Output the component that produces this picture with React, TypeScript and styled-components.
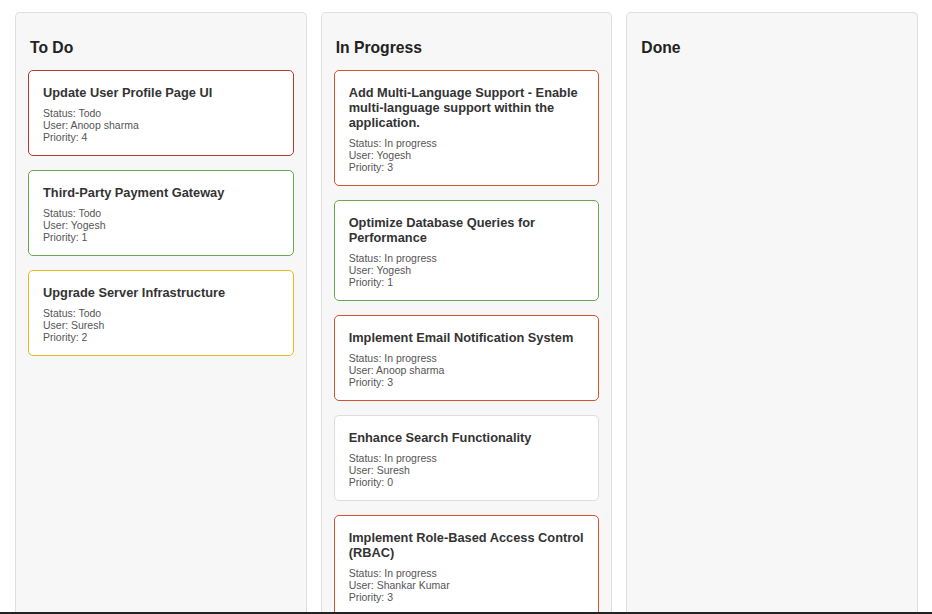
import React from "react";
import styled, { createGlobalStyle } from "styled-components";

type TTicket = {
  id: string;
  title: string;
  status: string;
  user: string;
  priority: number;
};

type TCard = {
  priority: number;
};

const GlobalStyle = createGlobalStyle`
  html, body {
    margin: 0;
    padding: 0;
    background: #ffffff;
    font-family: "Liberation Sans", Arial, sans-serif;
    overflow: hidden;
  }
`;

const priorityColors: Record<number, string> = {
  4: "#b8382e",
  3: "#d4522e",
  2: "#e8b91c",
  1: "#6aa84f",
  0: "#dddddd",
};

const Board = styled.div`
  display: grid;
  grid-template-columns: repeat(3, 1fr);
  gap: 14px;
  padding: 12px 14px 0 15px;
  height: 614px;
  box-sizing: border-box;
`;

const Column = styled.section`
  background: #f7f7f7;
  border: 1px solid #dedede;
  border-bottom: none;
  border-radius: 5px 5px 0 0;
  padding: 26px 12px 0;
  min-height: 640px;
  box-sizing: border-box;
`;

const Heading = styled.h2`
  margin: 0 0 13px;
  padding-left: 2px;
  font-size: 15.7px;
  line-height: 18px;
  font-weight: 700;
  color: #222;
`;

const List = styled.div`
  display: flex;
  flex-direction: column;
  gap: 14px;
`;

const Card = styled.div<TCard>`
  background: #fff;
  border: 1px solid ${({ priority }) => priorityColors[priority]};
  border-radius: 5px;
  padding: 14px 10px 12px 14px;
`;

const Title = styled.h3`
  margin: 0 0 7px;
  font-size: 12.8px;
  line-height: 15px;
  font-weight: 700;
  color: #333;
`;

const Meta = styled.p`
  margin: 0;
  font-size: 10.5px;
  line-height: 12px;
  color: #555;
`;

const BottomEdge = styled.div`
  position: fixed;
  left: 0;
  right: 0;
  bottom: 0;
  height: 2px;
  background: #222;
`;

const columns: { name: string; tickets: TTicket[] }[] = [
  {
    name: "To Do",
    tickets: [
      { id: "1", title: "Update User Profile Page UI", status: "Todo", user: "Anoop sharma", priority: 4 },
      { id: "2", title: "Third-Party Payment Gateway", status: "Todo", user: "Yogesh", priority: 1 },
      { id: "3", title: "Upgrade Server Infrastructure", status: "Todo", user: "Suresh", priority: 2 },
    ],
  },
  {
    name: "In Progress",
    tickets: [
      {
        id: "4",
        title: "Add Multi-Language Support - Enable multi-language support within the application.",
        status: "In progress",
        user: "Yogesh",
        priority: 3,
      },
      { id: "5", title: "Optimize Database Queries for Performance", status: "In progress", user: "Yogesh", priority: 1 },
      { id: "6", title: "Implement Email Notification System", status: "In progress", user: "Anoop sharma", priority: 3 },
      { id: "7", title: "Enhance Search Functionality", status: "In progress", user: "Suresh", priority: 0 },
      { id: "8", title: "Implement Role-Based Access Control (RBAC)", status: "In progress", user: "Shankar Kumar", priority: 3 },
    ],
  },
  { name: "Done", tickets: [] },
];

const App = () => {
  return (
    <>
      <GlobalStyle />
      <Board>
        {columns.map((col) => (
          <Column key={col.name}>
            <Heading>{col.name}</Heading>
            <List>
              {col.tickets.map((t) => (
                <Card key={t.id} priority={t.priority}>
                  <Title>{t.title}</Title>
                  <Meta>Status: {t.status}</Meta>
                  <Meta>User: {t.user}</Meta>
                  <Meta>Priority: {t.priority}</Meta>
                </Card>
              ))}
            </List>
          </Column>
        ))}
      </Board>
      <BottomEdge />
    </>
  );
};

export default App;
